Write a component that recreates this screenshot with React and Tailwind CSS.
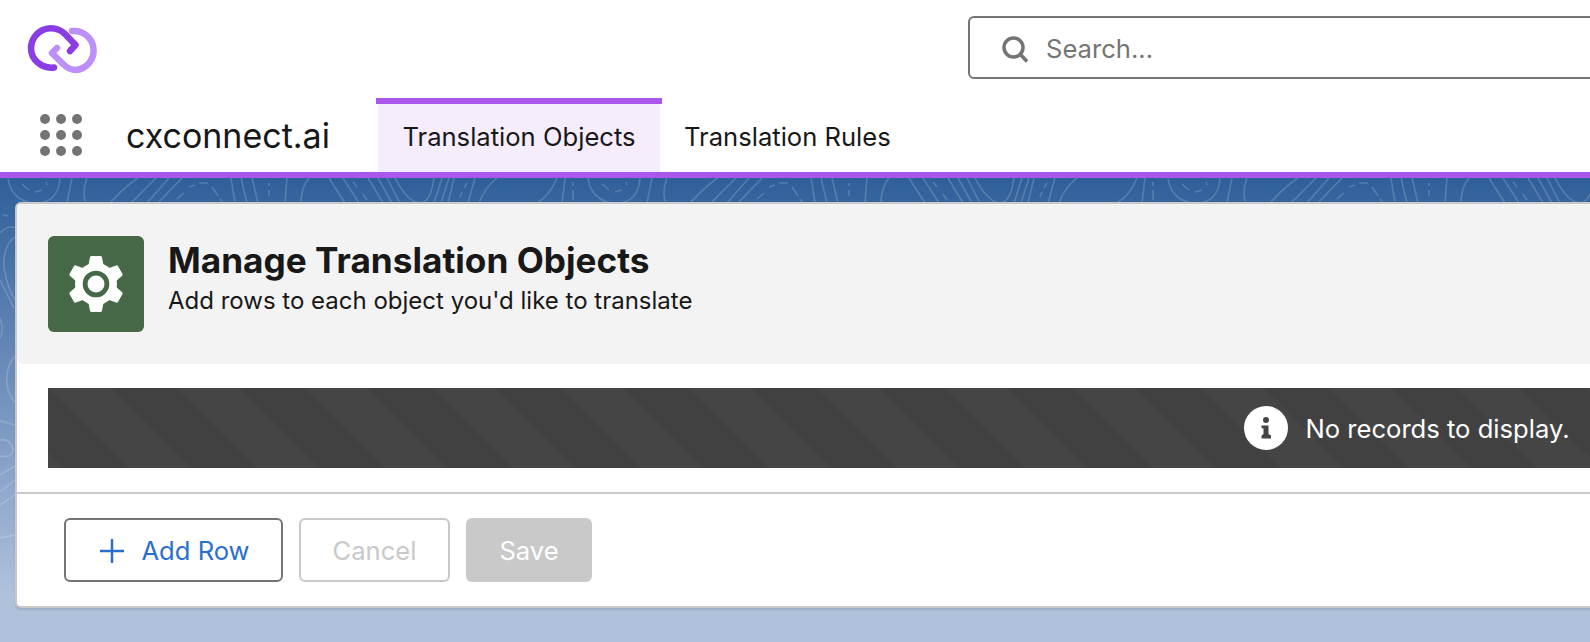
// Manage Translation Objects page
const CONTOURS = [
  // band under the nav bar, repeats every 580px
  'M8 178C10 198 27 203 34 203C50 204 59 195 60 178',
  'M22 184L29 190M35 192L42 190M46 182L47 185',
  'M72 178L67 203',
  'M87 178C82 190 84 198 86 203',
  'M138 178C125 186 118 195 110 203',
  'M156 178L131 203M169 178L147 203M182 178L158 203',
  'M184 193L177 199M189 187L195 185M199 183L208 183M212 187L218 196M220 199L223 203',
  'M231 178L235 203M241 178L247 203M252 178L258 203',
  'M269 183L269 186M269 190L269 196',
  'M287 178L285 203',
  'M309 178C303 185 301 195 301 203',
  'M329 178L345 203M343 178L359 203',
  'M353 182L357 187M363 194L367 200',
  'M368 178L383 203M378 178L392 203M387 178L400 203',
  'M395 178C405 198 415 203 420 203C428 203 432 192 434 178',
  'M442 178L434 203M449 178L441 203M454 178L448 203',
  'M467 183L464 188M462 192L460 197',
  'M475 178L468 203',
  'M497 178C487 186 482 195 479 203',
  'M557 178C552 190 546 198 537 203',
  'M565 178L562 203',
  'M573 182L573 186M573 190L573 200',
  'M581 178L587 203',
  // left edge, next to the card
  'M3 215L8 216',
  'M0 233C6 227 11 226 15 228',
  'M15 237C5 243 2 260 5 273C7 283 12 295 15 300',
  'M0 280L14 308',
  'M0 318C3 325 3 333 0 338',
  'M15 356C5 368 3 387 15 403',
  'M0 421L15 425',
  'M0 440C8 438 13 445 13 450C13 457 5 457 0 456',
  'M0 475L15 466M0 492L15 480M0 505L15 495',
  'M0 538L15 535',
]

const gearAngles = [0, 60, 120, 180, 240, 300]

function Logo() {
  return (
    <svg width="72" height="50" viewBox="26 25 72 50" fill="none" strokeWidth="6.5" strokeLinecap="round" strokeLinejoin="round" className="shrink-0">
      <path d="M71 31A19.5 19.5 0 1 1 75 70C70 70 66 68 62 64L51 53L56 48" stroke="#bd8ff8" />
      <path d="M53 67.5C41 69 30 60 30 48A20 20 0 0 1 64 34L74.500 45L69 51" stroke="#8a3de2" />
    </svg>
  )
}

function AppGrid() {
  return (
    <div className="grid grid-cols-3 gap-[6px] w-[42px] shrink-0">
      {Array.from({ length: 9 }).map((_, i) => (
        <span key={i} className="w-[10px] h-[10px] rounded-full bg-[#747474]" />
      ))}
    </div>
  )
}

function GearIcon() {
  return (
    <svg width="60" height="60" viewBox="-30 -30 60 60">
      {gearAngles.map(a => (
        <path
          key={a}
          transform={`rotate(${a})`}
          d="M-6 -19L-4.500 -26.500H4.500L6 -19Z"
          fill="#fff"
          stroke="#fff"
          strokeWidth="3"
          strokeLinejoin="round"
        />
      ))}
      <circle r="21" fill="#fff" />
      <circle r="13.300" fill="#466846" />
      <circle r="8.500" fill="#fff" />
    </svg>
  )
}

function InfoIcon() {
  return (
    <svg width="44" height="44" viewBox="0 0 44 44" className="shrink-0">
      <circle cx="22" cy="22" r="22" fill="#fff" />
      <circle cx="22" cy="14" r="3" fill="#444" />
      <path d="M17.500 19.500H24.500V28L27 29.500V32.500H17.500V29.500L19.500 28V22.500L17.500 22Z" fill="#444" />
    </svg>
  )
}

export default function App() {
  return (
    <div className="flex flex-col w-[1590px] h-[642px] overflow-hidden bg-white text-[#181818] font-['Inter','Liberation_Sans',sans-serif]">
      {/* 상단 헤더 */}
      <div className="flex h-[98px] shrink-0 pl-[27px] pt-[25px]">
        <Logo />
        <div className="flex items-center gap-[17px] ml-[869px] -mt-[9px] pt-[4px] w-[800px] h-[63px] shrink-0 border-2 border-[#747474] rounded-md pl-[32px] text-[25.6px] text-[#747474]">
          <svg width="27" height="27" viewBox="0 0 27 27" fill="none" stroke="#747474" strokeWidth="3.500" className="shrink-0">
            <circle cx="11.500" cy="11.500" r="9.500" />
            <path d="M18.500 18.500L25 25.500" />
          </svg>
          <span>Search...</span>
        </div>
      </div>

      {/* 네비게이션 */}
      <div className="flex items-stretch h-[80px] shrink-0 border-b-[6px] border-[#a958eb]">
        <div className="flex items-center pl-[40px] w-[126px] shrink-0">
          <AppGrid />
        </div>
        <div className="flex items-center w-[250px] shrink-0 text-[34px]">cxconnect.ai</div>
        <div className="w-[286px] shrink-0 border-t-[6px] border-[#a958eb]">
          <div className="flex items-center justify-center h-full pb-[2px] mx-0.5 bg-[#f5ecfc] text-[25.6px]">Translation Objects</div>
        </div>
        <div className="flex items-center pl-[22px] pt-[4px] text-[25.6px]">Translation Rules</div>
      </div>

      {/* 본문 */}
      <div className="relative flex-1 overflow-hidden pt-[24px] pl-[15px] bg-[linear-gradient(to_bottom,#2f5f9a,#b0c1dc_90%)]">
        <svg className="absolute inset-0 w-full h-full" fill="none">
          <defs>
            <pattern id="contours" width="580" height="464" patternUnits="userSpaceOnUse">
              <g transform="translate(0,-178)" stroke="#fff" strokeOpacity="0.17" strokeWidth="1.6">
                {CONTOURS.map((d, i) => (
                  <path key={i} d={d} />
                ))}
              </g>
            </pattern>
          </defs>
          <rect width="100%" height="100%" fill="url(#contours)" />
        </svg>

        <div className="relative w-[2800px] h-[406px] border-2 border-[#c9c9c9] rounded-md bg-white shadow-[0_2px_2px_rgba(0,0,0,0.1)]">
          <div className="flex items-start gap-[24px] h-[160px] pt-[32px] px-[31px] bg-[#f3f3f3] rounded-t-[4px] rounded-b-md">
            <div className="flex items-center justify-center w-[96px] h-[96px] rounded-md bg-[#466846]">
              <GearIcon />
            </div>
            <div>
              <h1 className="text-[35.2px] leading-[48px] font-bold">Manage Translation Objects</h1>
              <p className="text-[24px] leading-[34px]">Add rows to each object you'd like to translate</p>
            </div>
          </div>

          <div className="pt-[24px] pl-[31px] pb-[24px] border-b-2 border-[#c9c9c9]">
            <div className="flex items-center justify-center gap-[17px] w-[2718px] h-[80px] text-white text-[25.6px] bg-[#414141] bg-[linear-gradient(45deg,rgba(255,255,255,0.025)_25%,transparent_25%,transparent_50%,rgba(255,255,255,0.025)_50%,rgba(255,255,255,0.025)_75%,transparent_75%,transparent)] bg-[length:128px_128px]">
              <InfoIcon />
              <span className="pt-[2px]">No records to display.</span>
            </div>
          </div>

          <div className="flex gap-4 pt-[24px] pl-[47px] text-[25.6px]">
            <button className="flex items-center justify-center gap-[16px] w-[219px] h-[64px] pl-[2px] pt-[2px] border-2 border-[#747474] rounded-md text-[#2a6fd0]">
              <svg width="26" height="26" viewBox="0 0 26 26" stroke="#2a6fd0" strokeWidth="2.500" className="shrink-0">
                <path d="M13 1V25M1 13H25" />
              </svg>
              Add Row
            </button>
            <button className="w-[151px] h-[64px] pt-[2px] border-2 border-[#c9c9c9] rounded-md text-[#c9c9c9]">Cancel</button>
            <button className="w-[126px] h-[64px] pt-[2px] rounded-md bg-[#c9c9c9] text-white">Save</button>
          </div>
        </div>
      </div>
    </div>
  )
}
